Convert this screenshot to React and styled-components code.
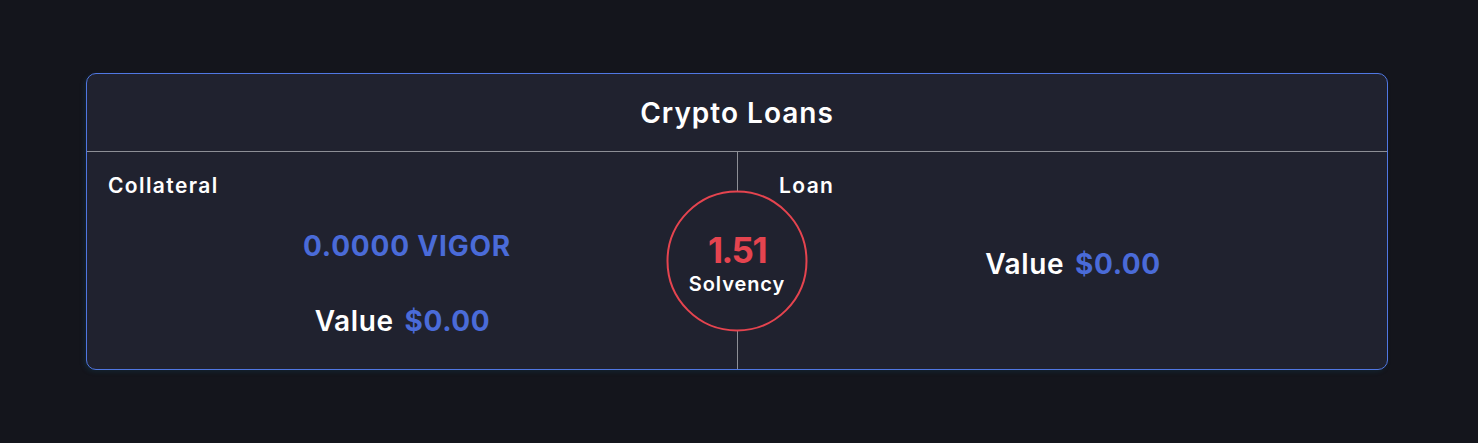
import React from "react";
import styled, { createGlobalStyle } from "styled-components";

const GlobalStyle = createGlobalStyle`
  body {
    margin: 0;
    background: #14151c;
    font-family: "Inter", "Open Sans", sans-serif;
  }
`;

const Page = styled.div`
  width: 1478px;
  height: 443px;
  padding: 73px 90px 0 86px;
  box-sizing: border-box;
`;

const Card = styled.div`
  width: 1302px;
  height: 297px;
  box-sizing: border-box;
  background: #20222f;
  border: 1px solid #5077e2;
  border-radius: 10px;
  display: flex;
  flex-direction: column;
  position: relative;
  box-shadow: -2px 2px 4px rgba(20, 60, 80, 0.35);
`;

const Header = styled.div`
  height: 77px;
  display: flex;
  align-items: center;
  justify-content: center;
  color: #fff;
  font-size: 28px;
  font-weight: 600;
  letter-spacing: 1px;
  border-bottom: 1px solid #8d8f96;
`;

const Body = styled.div`
  flex: 1;
  display: grid;
  grid-template-columns: 1fr 1fr;
  position: relative;
`;

const Column = styled.div`
  display: flex;
  flex-direction: column;
  padding: 22px 20px 0 ${(p) => p.$padLeft || 21}px;
  border-left: ${(p) => (p.$divided ? "1px solid #8d8f96" : "none")};
`;

const Label = styled.div`
  color: #fff;
  font-size: 21px;
  font-weight: 600;
  line-height: 24px;
  letter-spacing: 1.4px;
`;

const Amount = styled.div`
  color: #4a6bd8;
  font-size: 28px;
  font-weight: 700;
  letter-spacing: 0.8px;
  text-align: center;
  margin-top: ${(p) => p.$top}px;
  padding-right: ${(p) => p.$offset || 0}px;
`;

const ValueRow = styled.div`
  display: flex;
  justify-content: center;
  align-items: baseline;
  gap: 11px;
  margin-top: ${(p) => p.$top}px;
  padding-right: ${(p) => p.$offset || 0}px;
  font-size: 28px;
  font-weight: 600;
  letter-spacing: 0.6px;
  color: #fff;
  span {
    color: #4a6bd8;
    font-weight: 700;
  }
`;

const Gauge = styled.div`
  position: absolute;
  left: 50%;
  top: 50%;
  width: 141px;
  height: 141px;
  transform: translate(-50%, -50%);
  box-sizing: border-box;
  border: 2px solid #e5444f;
  border-radius: 50%;
  background: #20222f;
  display: flex;
  flex-direction: column;
  align-items: center;
  justify-content: center;
  padding-top: 4px;
`;

const Ratio = styled.div`
  color: #e5444f;
  font-size: 35px;
  font-weight: 700;
  line-height: 40px;
  letter-spacing: -1.5px;
`;

const GaugeLabel = styled.div`
  color: #fff;
  font-size: 20px;
  font-weight: 600;
  line-height: 24px;
  letter-spacing: 0.9px;
  margin-top: 2px;
`;

export default function App() {
  return (
    <>
      <GlobalStyle />
      <Page>
        <Card>
          <Header>Crypto Loans</Header>
          <Body>
            <Column>
              <Label>Collateral</Label>
              <Amount $top={31} $offset={11}>0.0000 VIGOR</Amount>
              <ValueRow $top={41} $offset={20}>
                Value <span>$0.00</span>
              </ValueRow>
            </Column>
            <Column $divided $padLeft={41}>
              <Label>Loan</Label>
              <ValueRow $top={49}>
                Value <span>$0.00</span>
              </ValueRow>
            </Column>
            <Gauge>
              <Ratio>1.51</Ratio>
              <GaugeLabel>Solvency</GaugeLabel>
            </Gauge>
          </Body>
        </Card>
      </Page>
    </>
  );
}
